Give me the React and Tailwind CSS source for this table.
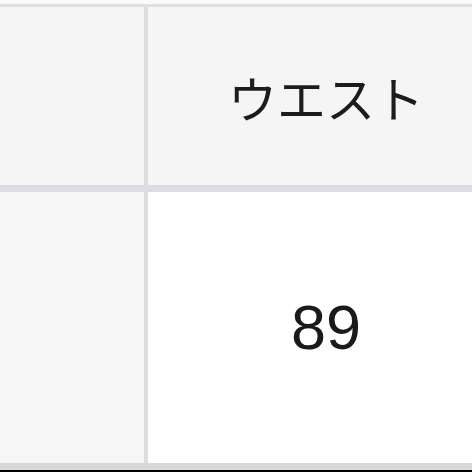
export default function App() {
  return (
    <div className="w-[472px] h-[472px] overflow-hidden bg-[#fafafa] flex flex-col">
      <div className="h-[4px] shrink-0 bg-[#fafafb]" />
      <div className="h-[3px] shrink-0 bg-[#dedee3]" />
      <div className="h-[178px] shrink-0 flex">
        <div className="w-[144px] shrink-0 bg-[#f5f5f6]" />
        <div className="w-[4px] shrink-0 bg-[#dcdde0]" />
        <div className="w-[356px] shrink-0 bg-[#f5f5f5] flex items-center justify-center">
          <span
            className="text-[49px] leading-none text-[#1c1c1c]"
            style={{ fontFamily: '"Noto Sans CJK JP", "Noto Sans", sans-serif' }}
          >
            ウエスト
          </span>
        </div>
      </div>
      <div className="h-[7px] shrink-0 bg-[#dcdce5]" />
      <div className="h-[271px] shrink-0 flex">
        <div className="w-[144px] shrink-0 bg-[#f6f6f7]" />
        <div className="w-[4px] shrink-0 bg-[#dcdde0]" />
        <div className="w-[356px] shrink-0 bg-white flex items-center justify-center">
          <span
            className="text-[63px] leading-none text-[#1a1a1a] pb-[1px]"
            style={{ fontFamily: '"Liberation Sans", Arial, sans-serif' }}
          >
            89
          </span>
        </div>
      </div>
      <div className="h-[7px] shrink-0 bg-[#d8d8da]" />
      <div className="h-[2px] shrink-0 bg-black" />
    </div>
  );
}
